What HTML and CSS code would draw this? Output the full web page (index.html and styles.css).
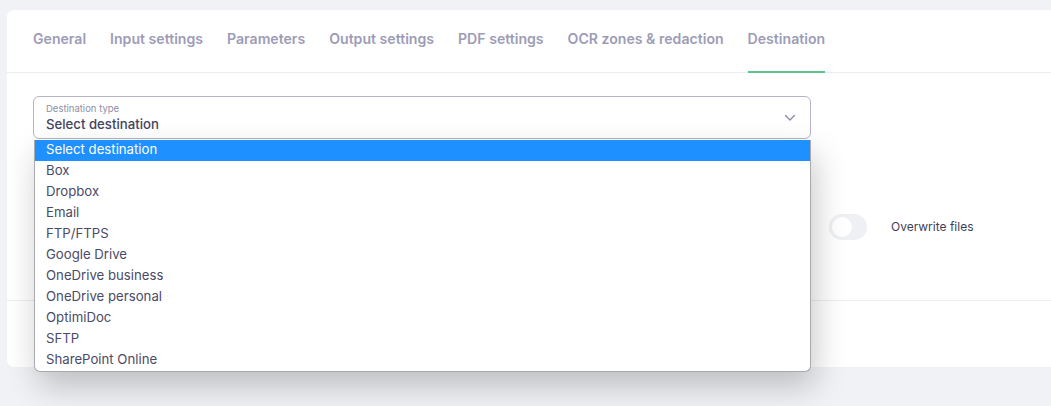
FILE: index.html
```html
<!DOCTYPE html>
<html lang="en">
<head>
  <meta charset="UTF-8" />
  <title>Destination</title>
  <link rel="stylesheet" href="styles.css">
</head>
<body>
  <div class="card">
    <nav class="tabs">
      <a class="tab">General</a>
      <a class="tab">Input settings</a>
      <a class="tab">Parameters</a>
      <a class="tab">Output settings</a>
      <a class="tab">PDF settings</a>
      <a class="tab">OCR zones &amp; redaction</a>
      <a class="tab active">Destination</a>
    </nav>

    <div class="content">
      <div class="select-wrap">
        <div class="select">
          <div class="select-text">
            <span class="select-label">Destination type</span>
            <span class="select-value">Select destination</span>
          </div>
          <svg class="chevron" width="12" height="8" viewBox="0 0 12 8">
            <path d="M1.5 1.5 L6 6 L10.5 1.5" fill="none" stroke="#8d8ba8" stroke-width="1.4" stroke-linecap="round" stroke-linejoin="round"/>
          </svg>
        </div>

        <ul class="options">
          <li class="selected">Select destination</li>
          <li>Box</li>
          <li>Dropbox</li>
          <li>Email</li>
          <li>FTP/FTPS</li>
          <li>Google Drive</li>
          <li>OneDrive business</li>
          <li>OneDrive personal</li>
          <li>OptimiDoc</li>
          <li>SFTP</li>
          <li>SharePoint Online</li>
        </ul>
      </div>

      <div class="row">
        <div class="row-spacer"></div>
        <label class="switch">
          <span class="toggle"><span class="knob"></span></span>
          <span class="switch-text">Overwrite files</span>
        </label>
      </div>
    </div>

    <div class="footer"></div>
  </div>
</body>
</html>
```

FILE: styles.css
```css
* {
  box-sizing: border-box;
}

body {
  margin: 0;
  padding: 10px 0 39px 7px;
  background: #f0f2f5;
  font-family: Inter, "Noto Sans", sans-serif;
  color: #4b4a68;
}

.card {
  position: relative;
  background: #fff;
  border-radius: 7px 0 0 7px;
}

.tabs {
  display: flex;
  gap: 24px;
  height: 63px;
  padding-left: 26px;
  border-bottom: 1px solid #ececef;
}

.tab {
  display: flex;
  align-items: center;
  padding-bottom: 4px;
  font-size: 14.1px;
  font-weight: 600;
  color: #9d9cb6;
  border-bottom: 2px solid transparent;
  margin-bottom: -1px;
}

.tab.active {
  border-bottom-color: #5cc48c;
}

.content {
  padding: 23px 26px 0;
  height: 228px;
  border-bottom: 1px solid #ececef;
}

.select-wrap {
  position: relative;
  width: 778px;
  z-index: 10;
}

.select {
  display: flex;
  align-items: center;
  justify-content: space-between;
  height: 43px;
  padding: 0 14px 0 12px;
  border: 1px solid #b5b3c8;
  border-radius: 6px;
}

.select-text {
  display: flex;
  flex-direction: column;
  padding-top: 1px;
}

.select-label {
  font-size: 9.5px;
  color: #8f8ea4;
  line-height: 12px;
}

.select-value {
  font-size: 13.2px;
  font-weight: 500;
  color: #45445e;
  line-height: 18px;
}

/* open dropdown list, lies over the form */
.options {
  position: absolute;
  top: 44px;
  left: 1px;
  right: 0;
  margin: 0;
  padding: 0;
  list-style: none;
  background: #fff;
  border: 1px solid #a9a9ae;
  border-top: none;
  border-radius: 0 0 6px 6px;
  box-shadow: 4px 14px 32px rgba(0, 0, 0, 0.22);
}

.options li {
  height: 21px;
  line-height: 19px;
  padding-left: 11px;
  font-size: 13.2px;
  color: #4b4a68;
}

.options li.selected {
  background: #1e90ff;
  color: #fff;
}

.row {
  display: flex;
  align-items: center;
  margin-top: 75px;
}

.row-spacer {
  width: 796px;
}

.switch {
  display: flex;
  align-items: center;
  gap: 24px;
}

.toggle {
  display: flex;
  align-items: center;
  width: 38px;
  height: 26px;
  padding: 3px;
  border-radius: 13px;
  background: #eef0f3;
}

.knob {
  width: 20px;
  height: 20px;
  border-radius: 50%;
  background: #fff;
}

.switch-text {
  font-size: 12px;
  color: #3f3e58;
  margin-top: -1px;
}

.footer {
  height: 66px;
}
```
